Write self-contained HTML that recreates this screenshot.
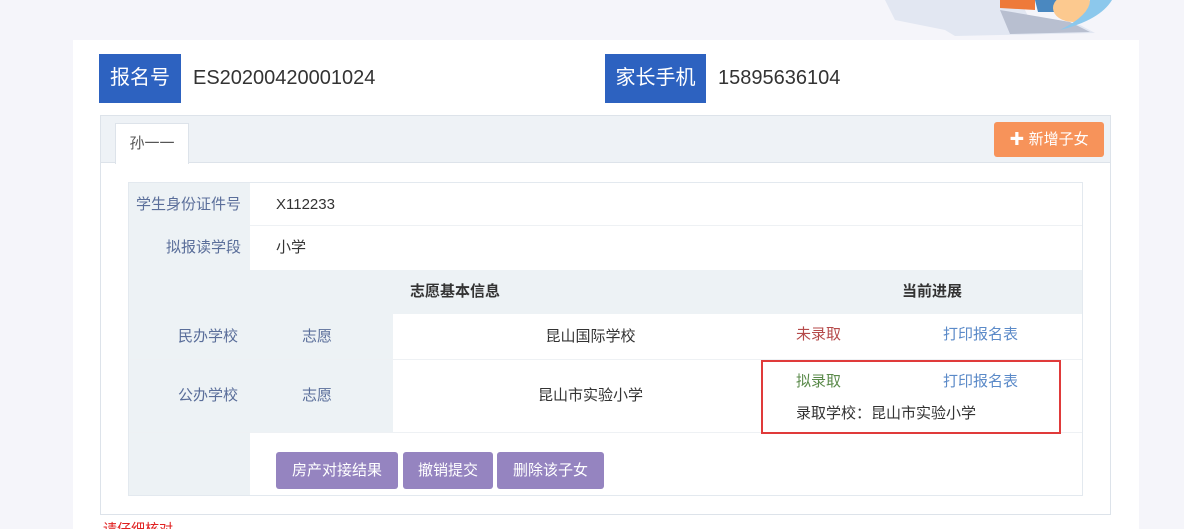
<!DOCTYPE html><html><head><meta charset="utf-8"><style>
*{margin:0;padding:0;box-sizing:border-box}
html,body{width:1184px;height:529px;overflow:hidden}
body{background:#f5f5fa;font-family:"Liberation Sans","Noto Sans CJK SC",sans-serif;position:relative;color:#333}
.a{position:absolute}
.lbl{background:#2d62c0;color:#fff;font-size:20px;line-height:49px;text-align:center}
.v{font-size:20px;line-height:49px;color:#333}
.g{background:#edf2f5}
.t{font-size:15px;color:#5a6e9a}
.btn{background:#9584c0;color:#fff;font-size:15px;border-radius:3px;text-align:center;line-height:37px}
</style></head><body>
<svg class="a" style="left:860px;top:0" width="260" height="38"><path d="M25 0 L160 0 L170 20 L220 25 L235 33 L95 36 L85 30 L35 20 Z" fill="#e2e7f2"/><path d="M140 10 L210 22 L230 32 L150 34 Z" fill="#b8bfd0"/><path d="M140 0 L175 0 L175 10 L140 8Z" fill="#ee7a3a"/><path d="M175 0 L200 0 L198 12 L178 12Z" fill="#4a88c0"/><ellipse cx="213" cy="8" rx="20" ry="14" fill="#fcc98f"/><path d="M230 0 L252 0 Q240 20 200 30 Q230 15 230 0Z" fill="#8cc8ec"/></svg>
<div class="a" style="left:73px;top:40px;width:1066px;height:489px;background:#fff"></div>
<div class="a lbl" style="left:99px;top:54px;width:82px">报名号</div>
<div class="a v" style="left:193px;top:54px">ES20200420001024</div>
<div class="a lbl" style="left:605px;top:54px;width:101px">家长手机</div>
<div class="a v" style="left:718px;top:54px">15895636104</div>
<div class="a" style="left:100px;top:115px;width:1011px;height:400px;border:1px solid #dde3ea"></div>
<div class="a" style="left:101px;top:116px;width:1009px;height:47px;background:#eef2f6;border-bottom:1px solid #dde3ea"></div>
<div class="a" style="left:115px;top:123px;width:74px;height:41px;background:#fff;border:1px solid #dde3ea;border-bottom:none;font-size:15px;line-height:40px;text-align:center;color:#555">孙一一</div>
<div class="a" style="left:994px;top:122px;width:110px;height:35px;background:#f7935a;border-radius:3px;color:#fff;font-size:15px;line-height:35px;text-align:center">✚ 新增子女</div>
<div class="a" style="left:128px;top:182px;width:955px;height:314px;border:1px solid #e3e9ef"></div>
<div class="a g" style="left:129px;top:183px;width:121px;height:87px"></div>
<div class="a" style="left:250px;top:225px;width:832px;height:1px;background:#eef1f4"></div>
<div class="a t" style="left:129px;top:183px;width:112px;line-height:43px;text-align:right">学生身份证件号</div>
<div class="a t" style="left:129px;top:226px;width:112px;line-height:43px;text-align:right">拟报读学段</div>
<div class="a" style="left:276px;top:183px;line-height:43px;font-size:15px">X112233</div>
<div class="a" style="left:276px;top:226px;line-height:43px;font-size:15px">小学</div>
<div class="a g" style="left:129px;top:270px;width:953px;height:44px"></div>
<div class="a" style="left:410px;top:270px;line-height:44px;font-size:15px;font-weight:bold">志愿基本信息</div>
<div class="a" style="left:902px;top:270px;line-height:44px;font-size:15px;font-weight:bold">当前进展</div>
<div class="a g" style="left:129px;top:314px;width:264px;height:118px"></div>
<div class="a" style="left:129px;top:359px;width:953px;height:1px;background:#eef1f4"></div>
<div class="a t" style="left:178px;top:314px;line-height:45px">民办学校</div>
<div class="a t" style="left:302px;top:314px;line-height:45px">志愿</div>
<div class="a" style="left:393px;top:314px;width:395px;line-height:45px;font-size:15px;text-align:center">昆山国际学校</div>
<div class="a" style="left:796px;top:314px;line-height:42px;font-size:15px;color:#b54a4a">未录取</div>
<div class="a" style="left:943px;top:314px;line-height:42px;font-size:15px;color:#5b8ac8">打印报名表</div>
<div class="a t" style="left:178px;top:359px;line-height:73px">公办学校</div>
<div class="a t" style="left:302px;top:359px;line-height:73px">志愿</div>
<div class="a" style="left:393px;top:359px;width:395px;line-height:73px;font-size:15px;text-align:center">昆山市实验小学</div>
<div class="a" style="left:796px;top:370px;font-size:15px;color:#5a8a4a">拟录取</div>
<div class="a" style="left:943px;top:370px;font-size:15px;color:#5b8ac8">打印报名表</div>
<div class="a" style="left:796px;top:402px;font-size:15px;color:#333">录取学校：昆山市实验小学</div>
<div class="a" style="left:129px;top:432px;width:953px;height:1px;background:#eef1f4"></div>
<div class="a g" style="left:129px;top:433px;width:121px;height:62px"></div>
<div class="a btn" style="left:276px;top:452px;width:122px">房产对接结果</div>
<div class="a btn" style="left:403px;top:452px;width:90px">撤销提交</div>
<div class="a btn" style="left:497px;top:452px;width:107px">删除该子女</div>
<div class="a" style="left:761px;top:360px;width:300px;height:74px;border:2px solid #e03a3a"></div>
<div class="a" style="left:103px;top:521px;font-size:14px;color:#e02020;line-height:16px">请仔细核对</div>
</body></html>
